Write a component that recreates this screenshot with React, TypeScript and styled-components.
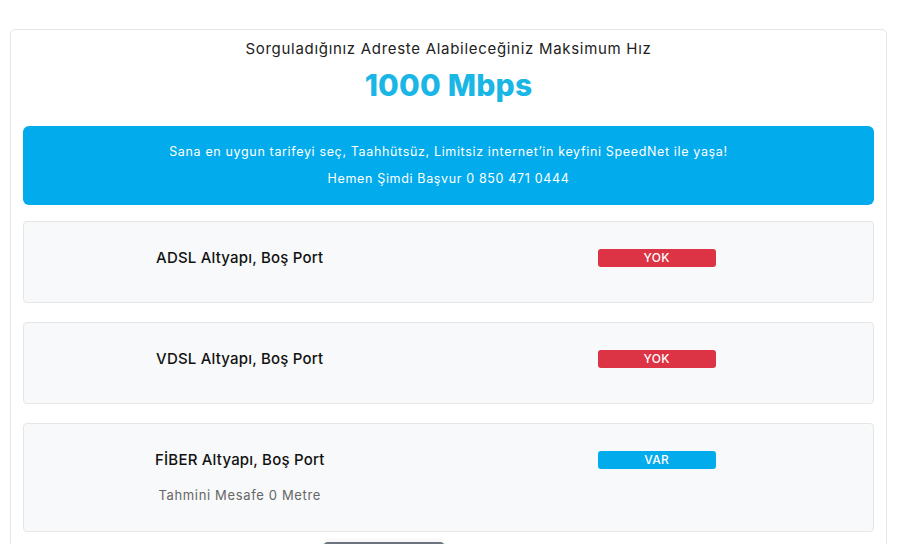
import styled, { createGlobalStyle } from 'styled-components';

const GlobalStyle = createGlobalStyle`
    body {
        margin: 0;
        padding: 0;
        background: #ffffff;
        font-family: "Inter", "Noto Sans", sans-serif;
        color: #212529;
    }
`

const Page = styled.div`
    padding: 29px 11px 0 10px;
`

const Card = styled.div`
    border: 1px solid #e4e4e4;
    border-radius: 5px;
    padding: 8px 12px 0;
    background: #fff;
`

const Title = styled.p`
    margin: 0;
    text-align: center;
    font-size: 15px;
    line-height: 22px;
    letter-spacing: 0.7px;
    color: #222;
`

const Speed = styled.h2`
    margin: 5px 0 0;
    text-align: center;
    font-size: 30px;
    line-height: 40px;
    font-weight: 800;
    color: #1ab6e6;
    letter-spacing: 0.2px;
`

const Banner = styled.div`
    margin-top: 21px;
    background: #02abec;
    border-radius: 6px;
    padding: 12px 12px 13px;
    text-align: center;
    color: #fff;
    font-size: 12.5px;
    line-height: 27px;
    letter-spacing: 0.65px;
`

const List = styled.div`
    display: flex;
    flex-direction: column;
    gap: 19px;
    margin-top: 16px;
`

const Row = styled.div`
    display: grid;
    grid-template-columns: 1fr 1fr;
    background: #f8f9fa;
    border: 1px solid #e6e6e6;
    border-radius: 4px;
    padding: 27px 0 19px;
`

const Info = styled.div`
    display: flex;
    flex-direction: column;
    align-items: center;
    padding-left: 7px;
`

const Name = styled.h4`
    margin: 0 0 16px;
    font-size: 15px;
    line-height: 18px;
    font-weight: 500;
    letter-spacing: 0.2px;
    color: #111;
`

const Distance = styled.p`
    margin: 0 0 7px;
    font-size: 13px;
    line-height: 20px;
    letter-spacing: 0.65px;
    color: #666;
`

const StatusCell = styled.div`
    display: flex;
    justify-content: center;
    align-items: flex-start;
    padding-right: 8px;
`

const Badge = styled.span<{ $ok: boolean }>`
    display: block;
    width: 118px;
    height: 18px;
    border-radius: 3px;
    background: ${p => (p.$ok ? '#02abec' : '#dc3444')};
    color: #fff;
    font-size: 12px;
    font-weight: 500;
    line-height: 18px;
    letter-spacing: 0.3px;
    text-align: center;
`

const Footer = styled.div`
    padding: 10px 0 0 300px;
`

const Button = styled.button`
    width: 122px;
    height: 34px;
    border: none;
    border-radius: 5px;
    background: #6c757d;
    color: #fff;
    font-family: inherit;
    font-size: 13px;
    box-shadow: 0 0 6px rgba(0, 0, 0, 0.08);
`

type Line = { name: string; ok: boolean; distance?: string };

const lines: Line[] = [
    { name: 'ADSL Altyapı, Boş Port', ok: false },
    { name: 'VDSL Altyapı, Boş Port', ok: false },
    { name: 'FİBER Altyapı, Boş Port', ok: true, distance: 'Tahmini Mesafe 0 Metre' },
];

export default function App() {
    return (
        <Page>
            <GlobalStyle />
            <Card>
                <Title>Sorguladığınız Adreste Alabileceğiniz Maksimum Hız</Title>
                <Speed>1000 Mbps</Speed>
                <Banner>
                    <div>Sana en uygun tarifeyi seç, Taahhütsüz, Limitsiz internet’in keyfini SpeedNet ile yaşa!</div>
                    <div>Hemen Şimdi Başvur 0 850 471 0444</div>
                </Banner>
                <List>
                    {lines.map(line => (
                        <Row key={line.name}>
                            <Info>
                                <Name>{line.name}</Name>
                                {line.distance && <Distance>{line.distance}</Distance>}
                            </Info>
                            <StatusCell>
                                <Badge $ok={line.ok}>{line.ok ? 'VAR' : 'YOK'}</Badge>
                            </StatusCell>
                        </Row>
                    ))}
                </List>
                <Footer>
                    <Button>Geri Dön</Button>
                </Footer>
            </Card>
        </Page>
    );
}
